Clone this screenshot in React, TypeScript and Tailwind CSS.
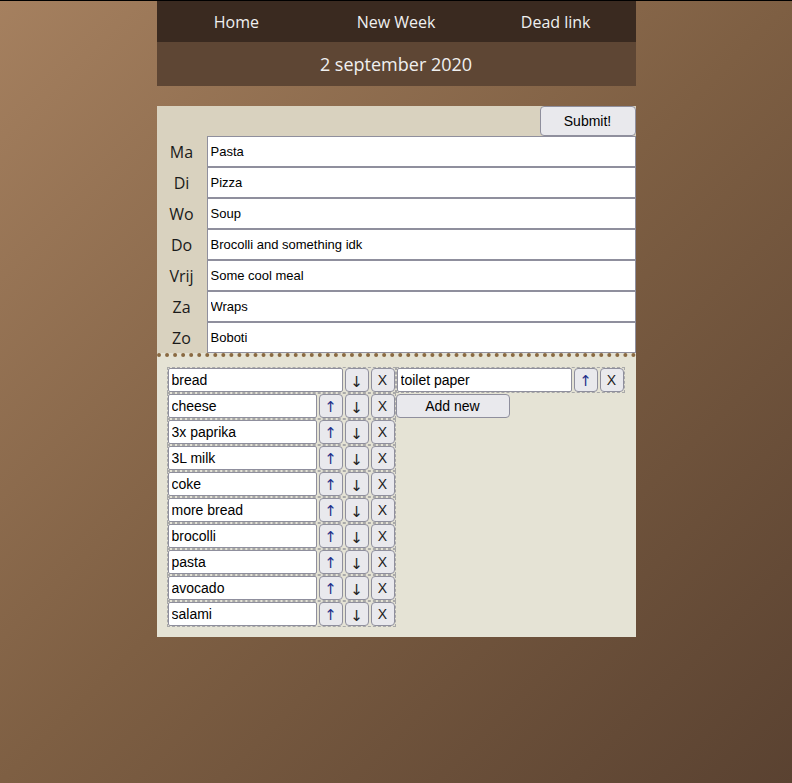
import React from 'react';

const days: [string, string][] = [
  ['Ma', 'Pasta'],
  ['Di', 'Pizza'],
  ['Wo', 'Soup'],
  ['Do', 'Brocolli and something idk'],
  ['Vrij', 'Some cool meal'],
  ['Za', 'Wraps'],
  ['Zo', 'Boboti'],
];

const listA = ['bread', 'cheese', '3x paprika', '3L milk', 'coke', 'more bread', 'brocolli', 'pasta', 'avocado', 'salami'];
const listB = ['toilet paper'];

const btn =
  'w-[24px] h-[24px] shrink-0 rounded-[4px] border border-[#8f8f9d] bg-[#e9e9ed] flex items-center justify-center leading-none';

function Item({ name, first, last }: { name: string; first: boolean; last: boolean }) {
  return (
    <div className="flex gap-[2px] border border-dashed border-[#a9a9a9] w-[229px] h-[26px]">
      <input
        defaultValue={name}
        className="flex-1 min-w-0 h-[24px] bg-white border border-[#8f8f9d] rounded-[2px] px-[3px] text-[14px] text-black outline-none"
      />
      {!first && (
        <button className={`${btn} text-[#1e2f8a] font-['DejaVu_Sans',sans-serif] text-[15px] pt-[2px]`}>↑</button>
      )}
      {!last && (
        <button className={`${btn} text-[#222] font-['DejaVu_Sans',sans-serif] text-[15px] pt-[5px]`}>↓</button>
      )}
      <button className={`${btn} text-[#222] text-[14px]`}>X</button>
    </div>
  );
}

export default function App() {
  return (
    <div className="min-h-[783px] border-t border-black bg-linear-to-br from-[#a5805f] via-[#7e5f43] to-[#5a4231] font-['Liberation_Sans',sans-serif]">
      <div className="w-[479px] mx-auto">
        <nav className="h-[41px] bg-[#3a2a20] grid grid-cols-3 font-['Open_Sans',sans-serif] text-[16px] text-[#f0f0f0]">
          <a className="flex items-center justify-center">Home</a>
          <a className="flex items-center justify-center">New Week</a>
          <a className="flex items-center justify-center">Dead link</a>
        </nav>
        <div className="h-[44px] bg-[#5e4634] flex items-center justify-center font-['Open_Sans',sans-serif] text-[18px] text-[#f0f0f0]">
          2 september 2020
        </div>

        <div className="mt-[20px]">
          <div className="bg-[#d9d2bf]">
            <div className="flex justify-end h-[30px]">
              <button className="w-[96px] h-[30px] rounded-[4px] border border-[#8f8f9d] bg-[#e9e9ed] text-[14px] text-black">
                Submit!
              </button>
            </div>
            {days.map(([d, meal]) => (
              <div key={d} className="flex h-[31px]">
                <div className="w-[50px] flex items-center justify-center text-[16px] text-[#1a1a1a] font-['Open_Sans',sans-serif]">
                  {d}
                </div>
                <input
                  defaultValue={meal}
                  className="flex-1 h-[31px] bg-white border border-[#8f8f9d] px-[3px] text-[13px] text-black outline-none"
                />
              </div>
            ))}
          </div>
          <div className="bg-[#e5e3d5] border-t-4 border-dotted border-[#8a6a42] px-[10px] pt-[10px] pb-[10px] flex">
            <div className="flex flex-col">
              {listA.map((n, i) => (
                <Item key={n} name={n} first={i === 0} last={false} />
              ))}
            </div>
            <div className="flex flex-col">
              {listB.map((n, i) => (
                <Item key={n} name={n} first={false} last={i === listB.length - 1} />
              ))}
              <button className="w-[114px] h-[24px] mt-[1px] rounded-[4px] border border-[#8f8f9d] bg-[#e9e9ed] text-[14px] text-black">
                Add new
              </button>
            </div>
          </div>
        </div>
      </div>
    </div>
  );
}
